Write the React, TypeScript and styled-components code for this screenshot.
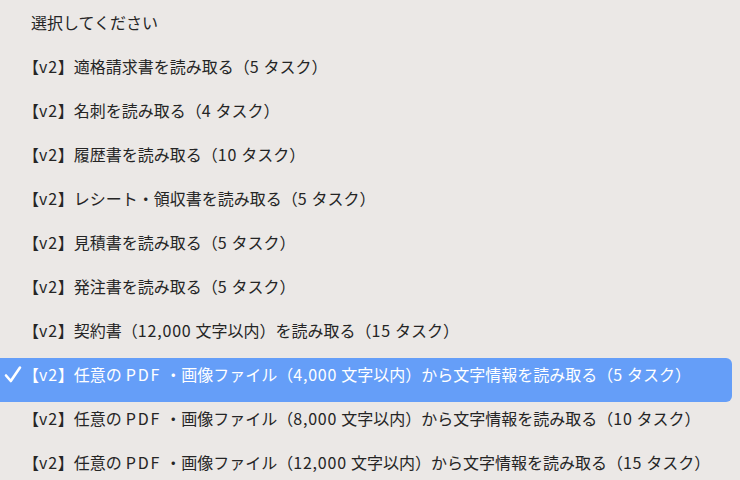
import styled, { createGlobalStyle } from 'styled-components';

const GlobalStyle = createGlobalStyle`
  html, body {
    margin: 0;
    padding: 0;
    background: #ebe8e6;
  }
  body {
    width: 740px;
    height: 480px;
    overflow: hidden;
  }
`;

const options = [
  '選択してください',
  '【v2】適格請求書を読み取る（5タスク）',
  '【v2】名刺を読み取る（4タスク）',
  '【v2】履歴書を読み取る（10タスク）',
  '【v2】レシート・領収書を読み取る（5タスク）',
  '【v2】見積書を読み取る（5タスク）',
  '【v2】発注書を読み取る（5タスク）',
  '【v2】契約書（12,000文字以内）を読み取る（15タスク）',
  '【v2】任意のPDF・画像ファイル（4,000文字以内）から文字情報を読み取る（5タスク）',
  '【v2】任意のPDF・画像ファイル（8,000文字以内）から文字情報を読み取る（10タスク）',
  '【v2】任意のPDF・画像ファイル（12,000文字以内）から文字情報を読み取る（15タスク）',
];

const SELECTED = 8;

// like the mac menu: a little air between latin runs and kana / kanji
const isCjk = (ch?: string) =>
  !!ch && /[\u3040-\u30ff\u4e00-\u9fff]/.test(ch);

const spaced = (label: string) => {
  const parts: React.ReactNode[] = [];
  let last = 0;
  for (const m of label.matchAll(/[A-Za-z0-9,.]+/g)) {
    const start = m.index ?? 0;
    const end = start + m[0].length;
    if (start > last) parts.push(label.slice(last, start));
    parts.push(
      <Latin
        key={start}
        $before={isCjk(label[start - 1])}
        $after={isCjk(label[end])}
        $caps={/^[A-Z]+$/.test(m[0])}
      >
        {m[0]}
      </Latin>
    );
    last = end;
  }
  if (last < label.length) parts.push(label.slice(last));
  return parts;
};

export default function App() {
  return (
    <>
      <GlobalStyle />
      <Menu>
        {options.map((label, i) => (
          <Option key={label} $selected={i === SELECTED}>
            <CheckSlot>
              {i === SELECTED && (
                <svg width="18" height="18" viewBox="0 0 18 18">
                  <path
                    d="M2 10.5 L6.8 16 L16 2.5"
                    fill="none"
                    stroke="#fff"
                    strokeWidth="2.6"
                    strokeLinecap="round"
                    strokeLinejoin="round"
                  />
                </svg>
              )}
            </CheckSlot>
            <Label>{spaced(label)}</Label>
          </Option>
        ))}
      </Menu>
    </>
  );
}

const Menu = styled.div`
  display: flex;
  flex-direction: column;
  padding-top: 6px;
  width: 740px;
  height: 480px;
  box-sizing: border-box;
  overflow: hidden;
  font-family: 'Noto Sans CJK JP', 'Noto Sans', sans-serif;
  font-size: 16px;
`;

const Option = styled.div<{ $selected?: boolean }>`
  display: flex;
  align-items: flex-start;
  flex: none;
  height: 44px;
  box-sizing: border-box;
  padding-top: 4px;
  margin-right: 8px;
  border-radius: 0 6px 6px 0;
  color: ${(p) => (p.$selected ? '#ffffff' : '#252525')};
  background: ${(p) => (p.$selected ? '#659ef8' : 'transparent')};
`;

const CheckSlot = styled.div`
  width: 31px;
  flex: none;
  display: flex;
  align-items: center;
  justify-content: flex-start;
  padding-left: 4px;
  box-sizing: border-box;
  height: 24px;
`;

const Label = styled.span`
  line-height: 24px;
  white-space: nowrap;
  text-spacing-trim: trim-start;
  text-autospace: no-autospace;
`;

const Latin = styled.span<{ $before?: boolean; $after?: boolean; $caps?: boolean }>`
  margin-left: ${(p) => (p.$before ? '4px' : '0')};
  margin-right: ${(p) => (p.$after ? '4px' : '0')};
  letter-spacing: ${(p) => (p.$caps ? '1.8px' : '0.8px')};
`;
